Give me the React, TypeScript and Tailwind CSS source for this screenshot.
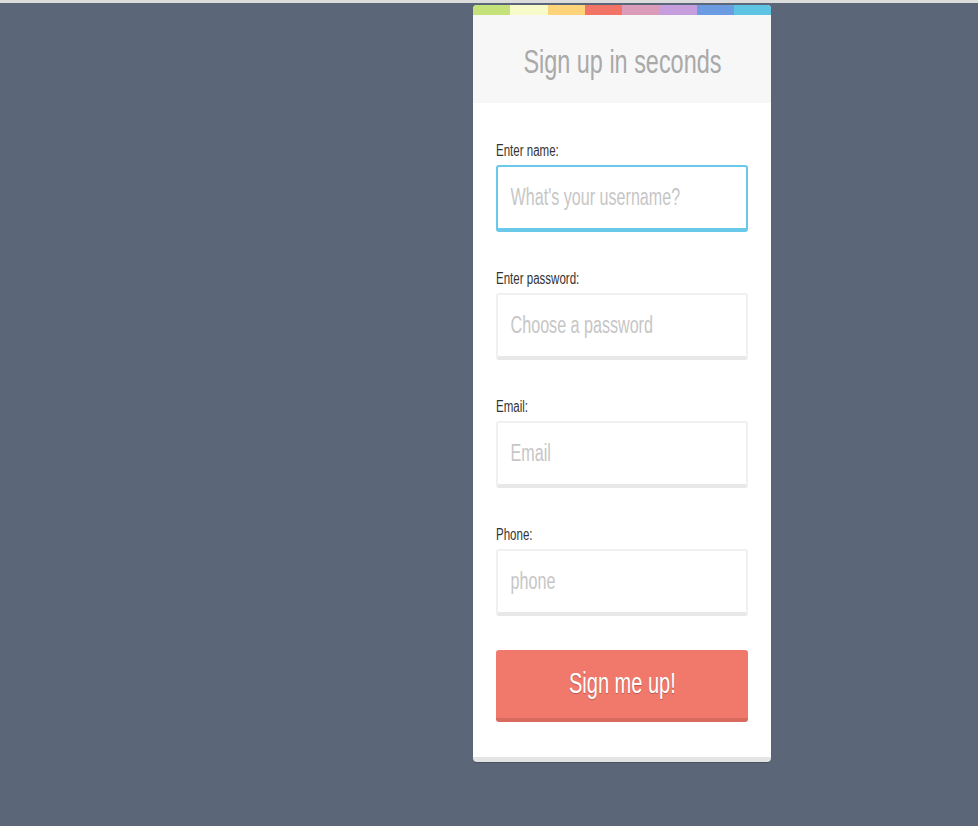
const STRIPES = [
  "bg-[#c5e17a]",
  "bg-[#f6fbc9]",
  "bg-[#fed37a]",
  "bg-[#f17467]",
  "bg-[#db9cba]",
  "bg-[#c69edd]",
  "bg-[#6b9be0]",
  "bg-[#5ec4e4]",
];

const FIELDS = [
  { label: "Enter name:", placeholder: "What's your username?", type: "text", focused: true },
  { label: "Enter password:", placeholder: "Choose a password", type: "password", focused: false },
  { label: "Email:", placeholder: "Email", type: "email", focused: false },
  { label: "Phone:", placeholder: "phone", type: "tel", focused: false },
];

export default function App() {
  return (
    <div
      className="min-h-[826px] bg-[#5b6678] border-t-[3px] border-[#dcdcdc] pt-[2px]"
      style={{ fontFamily: '"Liberation Sans", Arial, sans-serif' }}
    >
      <div className="ml-[473px] w-[298px] bg-white rounded-[4px] overflow-hidden border-b-[5px] border-[#e4e4e4] shadow-[0_1px_1px_rgba(0,0,0,0.2)]">
        {/* colour strip */}
        <div className="flex h-[10px]">
          {STRIPES.map((c) => (
            <div key={c} className={`flex-1 ${c}`} />
          ))}
        </div>

        {/* header */}
        <div className="h-[88px] bg-[#f7f7f7] flex items-center justify-center pt-[5px]">
          <h1 className="inline-block text-[33px] text-[#a9a9a9] leading-none whitespace-nowrap scale-x-[0.71]">
            Sign up in seconds
          </h1>
        </div>

        {/* form */}
        <form className="px-[23px] pt-[40px] pb-[35px]" onSubmit={(e) => e.preventDefault()}>
          {FIELDS.map((f) => (
            <div key={f.label} className="mb-[39px]">
              <label className="block h-[16px] mb-[6px] text-[16px] leading-[16px] text-[#333] whitespace-nowrap origin-left scale-x-[0.72]">
                {f.label}
              </label>
              <div
                className={
                  f.focused
                    ? "h-[67px] rounded-[3px] border-2 border-b-4 border-[#6ac8e8] overflow-hidden"
                    : "h-[67px] rounded-[3px] border-2 border-b-4 border-[#f0f0f0] border-b-[#e8e8e8] overflow-hidden"
                }
              >
                <input
                  type={f.type}
                  placeholder={f.placeholder}
                  className="block w-[143%] h-full pl-[18px] bg-transparent text-[23px] text-[#555] placeholder:text-[#c6c6c6] outline-none origin-left scale-x-[0.7]"
                />
              </div>
            </div>
          ))}

          <button
            type="submit"
            className="block w-full h-[72px] -mt-[5px] rounded-[3px] bg-[#f0796c] border-b-4 border-[#d96a5e] text-white"
          >
            <span className="inline-block text-[29px] leading-none scale-x-[0.69] [text-shadow:0_1px_1px_rgba(0,0,0,0.25)]">
              Sign me up!
            </span>
          </button>
        </form>
      </div>
    </div>
  );
}
